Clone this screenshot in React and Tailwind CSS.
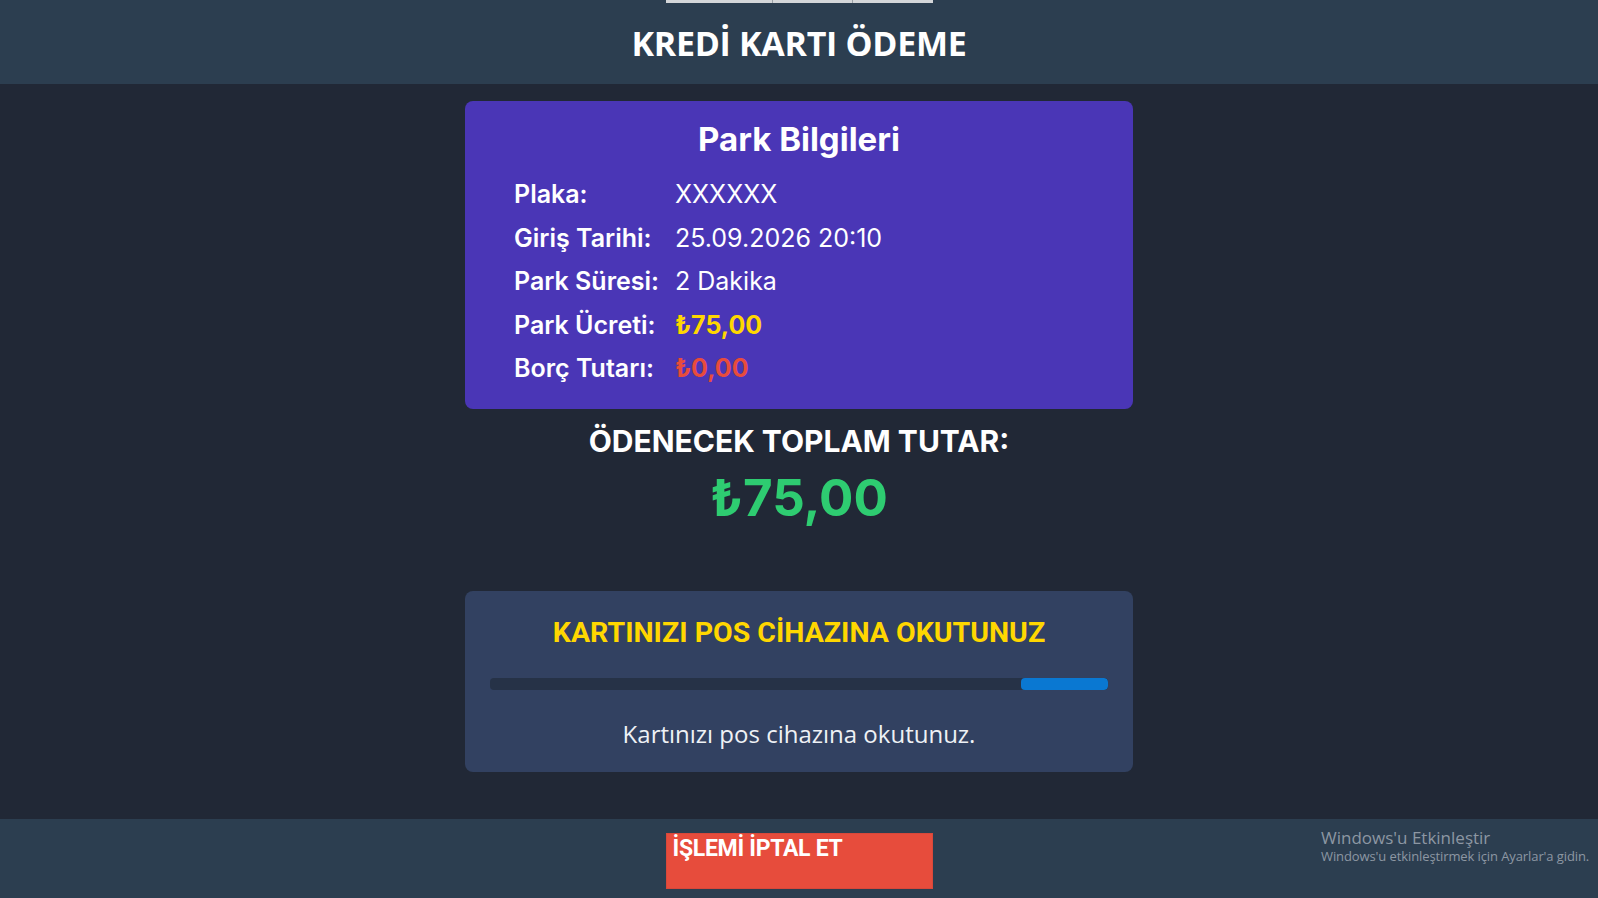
import React from 'react';

const ROWS = [
  { label: 'Plaka:', value: 'XXXXXX', tone: 'text-white font-normal' },
  { label: 'Giriş Tarihi:', value: '25.09.2026 20:10', tone: 'text-white font-normal' },
  { label: 'Park Süresi:', value: '2 Dakika', tone: 'text-white font-normal' },
  { label: 'Park Ücreti:', value: '₺75,00', tone: 'text-[#ffd700] font-bold' },
  { label: 'Borç Tutarı:', value: '₺0,00', tone: 'text-[#e74c3c] font-bold' },
];

export default function App() {
  const progress = 14;

  return (
    <div className="relative flex h-screen flex-col overflow-hidden bg-[#212836] font-['Inter','Noto_Sans',sans-serif] text-white">
      <header className="flex h-[84px] shrink-0 flex-col items-center bg-[#2c3e50]">
        <div className="flex h-[3px] w-[267px] bg-[#d4d6d9]">
          <div className="w-[107px] border-r border-[#9aa0a6]" />
          <div className="w-[80px] border-r border-[#9aa0a6]" />
        </div>
        <h1 className="mt-[19px] font-['Open_Sans',sans-serif] text-[34px] font-bold leading-[42px] tracking-[-0.3px]">
          KREDİ KARTI ÖDEME
        </h1>
      </header>

      <main className="flex flex-1 flex-col items-center pt-[17px]">
        <section className="w-[668px] rounded-lg bg-[#4a36b6] pb-[24px] pt-[18px]">
          <h2 className="text-center text-[33px] font-bold leading-10">Park Bilgileri</h2>
          <div className="mt-[19px] flex flex-col gap-[11px] pl-[49px]">
            {ROWS.map((row) => (
              <div key={row.label} className="flex text-[25px] leading-[32.5px]">
                <span className="w-[161px] shrink-0 font-semibold">{row.label}</span>
                <span className={row.tone}>{row.value}</span>
              </div>
            ))}
          </div>
        </section>

        <p className="mt-[14px] text-3xl font-bold leading-9">ÖDENECEK TOPLAM TUTAR:</p>
        <p className="mt-[13px] text-[51px] font-bold leading-[52px] text-[#2ecc71]">₺75,00</p>

        <section className="mt-[67px] w-[668px] rounded-lg bg-[#324161] px-[25px] pb-[22px] pt-[24px]">
          <h3 className="text-center font-['Roboto',sans-serif] text-[28.5px] font-bold leading-9 text-[#ffd700]">
            KARTINIZI POS CİHAZINA OKUTUNUZ
          </h3>
          <div className="mt-[27px] h-3 overflow-hidden rounded-sm bg-[#263247]">
            <div className="ml-auto h-full rounded-sm bg-[#0a78d2]" style={{ width: `${progress}%` }} />
          </div>
          <p className="mt-[28px] text-center font-['Open_Sans',sans-serif] text-[24px] leading-8 text-[#eef1f5]">
            Kartınızı pos cihazına okutunuz.
          </p>
        </section>
      </main>

      <footer className="flex h-[79px] shrink-0 justify-center bg-[#2c3e50] pt-[14px]">
        <div className="h-[56px] w-[267px] self-start border border-[#d8483a] bg-[#e74c3c] px-[6px] pt-[1px] text-left font-['Roboto',sans-serif] text-[23px] font-bold leading-7 tracking-[-0.3px] text-white">
          İŞLEMİ İPTAL ET
        </div>
      </footer>

      <div className="pointer-events-none absolute bottom-[34px] left-[1321px] font-['Open_Sans',sans-serif] text-[#8d97a3]">
        <p className="text-[17px] leading-[21px]">Windows'u Etkinleştir</p>
        <p className="text-[13px] leading-4 tracking-[-0.1px]">Windows'u etkinleştirmek için Ayarlar'a gidin.</p>
      </div>
    </div>
  );
}
